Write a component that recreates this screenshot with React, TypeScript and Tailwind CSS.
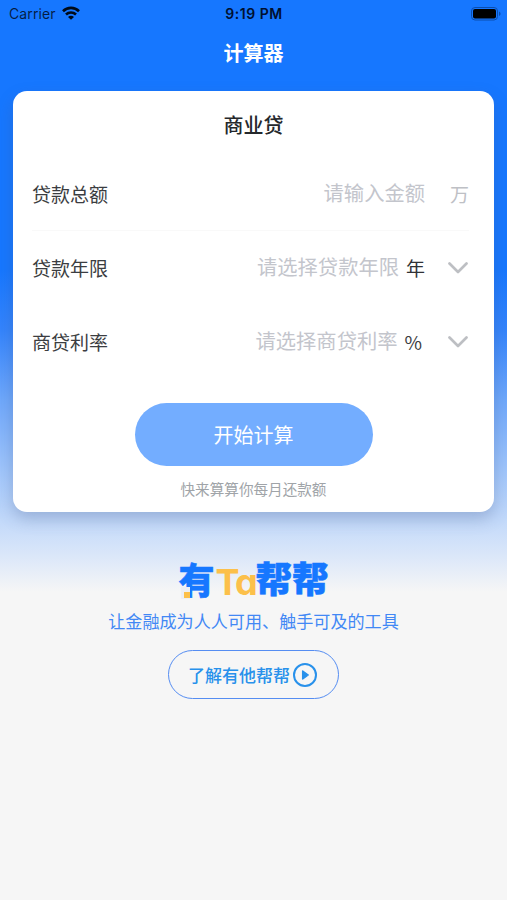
import type { ReactNode } from "react";

function StatusBar() {
  return (
    <div className="grid h-7 grid-cols-3 items-center pl-[9px] pr-[6px] font-['Inter','Liberation_Sans',sans-serif] text-black/75">
      <div className="flex items-center gap-[6px]">
        <span className="text-[14px] leading-7 tracking-[0.1px]">Carrier</span>
        <svg className="-mt-[2px]" width="18" height="14" viewBox="0 0 18 14" fill="none" stroke="#000b18" strokeWidth="2.6">
          <path d="M1 5.2C5.5.8 12.5.8 17 5.2" />
          <path d="M4 8.5c2.8-2.7 7.2-2.7 10 0" />
          <path d="M9 13.8 6 10.9c1.7-1.5 4.3-1.5 6 0z" fill="#000b18" stroke="none" />
        </svg>
      </div>
      <span className="-ml-[2px] whitespace-nowrap text-center text-[14px] font-semibold leading-7 tracking-[0.5px] text-[#001030]">9:19 PM</span>
      <svg className="-mt-px justify-self-end" width="30" height="14" viewBox="0 0 30 14">
        <rect x="0.5" y="0.5" width="26" height="12.5" rx="3.5" fill="none" stroke="#0b4eae" />
        <rect x="2" y="2" width="23" height="9.5" rx="2" fill="#000" />
        <path d="M28 4.5c2 .8 2 3.7 0 4.5z" fill="#0b4eae" />
      </svg>
    </div>
  );
}

function Row({ label, children }: { label: string; children: ReactNode }) {
  return (
    <div className="flex h-[74px] items-center justify-between">
      <span className="text-[19px] text-[#3b3d41]">{label}</span>
      <div className="flex items-center">{children}</div>
    </div>
  );
}

function Chevron() {
  return (
    <svg width="20" height="12" viewBox="0 0 20 12" fill="none" stroke="#bdbfc3" strokeWidth="2.7" strokeLinecap="round" strokeLinejoin="round">
      <path d="m1.5 1.5 8.5 8.5 8.5-8.5" />
    </svg>
  );
}

function Logo() {
  return (
    <div className="flex h-10 items-center justify-center text-[#1677ff]">
      <span className="relative -mt-[3px] text-[36px] font-black leading-10 [-webkit-text-stroke:0.5px_#1677ff]">
        有
        <i className="absolute bottom-[-1px] left-[3px] h-[12px] w-[9px] bg-[#eceff5]" />
        <i className="absolute bottom-0 left-[6px] size-[6px] bg-[#fcc04a]" />
      </span>
      <span className="w-[41px] whitespace-nowrap pl-[1px] pt-[5px] font-['Inter',sans-serif] text-[36px] font-bold leading-9 tracking-[-1.8px] text-[#fcc04a] [font-feature-settings:'cv11']">Ta</span>
      <span className="-mt-[3px] text-[36.5px] font-black leading-10 [-webkit-text-stroke:0.5px_#1677ff]">帮帮</span>
    </div>
  );
}

export default function App() {
  return (
    <div className="h-[900px] w-[507px] overflow-hidden bg-[#f6f6f6] bg-[linear-gradient(to_bottom,#1677ff_0px,#1677ff_270px,#3484fc_330px,#6fa8fb_400px,#9cc3fb_465px,#c2d9fa_520px,#dbe7f9_556px,#f6f6f6_592px)] font-['Noto_Sans_CJK_SC',sans-serif]">
      <StatusBar />
      <h1 className="h-[63px] text-center text-[20px] font-bold leading-[49px] text-white">计算器</h1>
      <main className="mx-[13px] h-[421px] rounded-[14px] bg-white shadow-[0_7px_16px_rgba(70,90,140,0.3)]">
        <h2 className="h-[66px] text-center text-[20px] font-medium leading-[67px] text-[#25282c]">商业贷</h2>
        <div className="pl-[19px] pr-[25px]">
          <div className="h-[74px] border-b border-[#f9f9f9]">
            <Row label="贷款总额">
              <span className="pb-[3px] text-[20.3px] text-[#c3c5cc]">请输入金额</span>
              <span className="ml-[25px] text-[19px] text-[#bec0c5]">万</span>
            </Row>
          </div>
          <div className="pr-px">
            <Row label="贷款年限">
              <span className="pb-[3px] text-[20.3px] text-[#c3c5cc]">请选择贷款年限</span>
              <span className="ml-[7px] mr-[23px] text-[19px] text-[#303236]">年</span>
              <Chevron />
            </Row>
            <Row label="商贷利率">
              <span className="pb-[3px] text-[20.3px] text-[#c3c5cc]">请选择商贷利率</span>
              <span className="ml-[7px] mr-[26px] text-[19px] text-[#3b3d41]">%</span>
              <Chevron />
            </Row>
          </div>
        </div>
        <button className="mx-auto mt-6 block h-[63px] w-[238px] rounded-full bg-[#73adff] text-[20px] leading-[63px] text-white">开始计算</button>
        <p className="mt-[11px] text-center text-[14.6px] leading-6 text-[#a0a4a8]">快来算算你每月还款额</p>
      </main>
      <section className="pt-[47px]">
        <Logo />
        <p className="mt-[10px] text-center text-[17.1px] leading-6 text-[#4288f5]">让金融成为人人可用、触手可及的工具</p>
        <button className="mx-auto mt-[17px] flex h-[49px] w-[171px] items-center justify-center gap-[3px] rounded-full border-[1.5px] border-[#558df2] pr-[2px] text-[17px] font-medium text-[#2891eb]">
          了解有他帮帮
          <svg width="24" height="24" viewBox="0 0 24 24">
            <circle cx="12" cy="12" r="11" fill="none" stroke="#2891eb" strokeWidth="2" />
            <path d="M9.7 8v8l5.5-4z" fill="#2891eb" stroke="#2891eb" strokeWidth="1.5" strokeLinejoin="round" />
          </svg>
        </button>
      </section>
    </div>
  );
}
